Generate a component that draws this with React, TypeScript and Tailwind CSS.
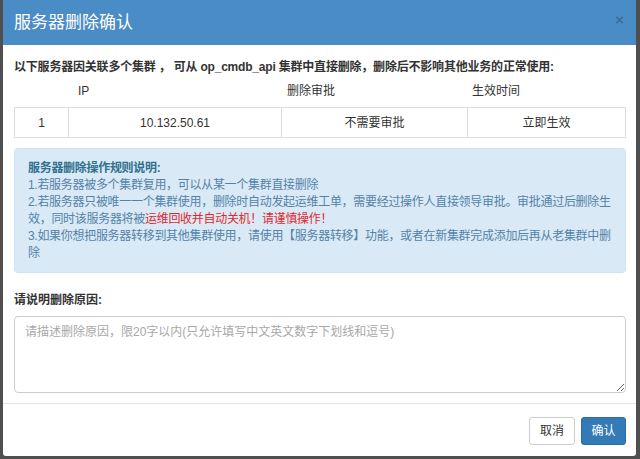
import React from 'react';

const font = { fontFamily: '"Liberation Sans", "Noto Sans CJK SC", sans-serif' };

const App = () => {
  return (
    <div className="w-[640px] h-[459px] bg-[#4f4f4f] pl-[3px] pr-[4px] pb-[3px]" style={font}>
      <div className="h-full bg-white flex flex-col rounded-b-[3px] overflow-hidden">
        {/* Header */}
        <div className="h-[45px] shrink-0 bg-[#4a8cc6] pl-[11px] pr-[12px] flex items-center justify-between">
          <span className="text-[17px] text-white leading-none">服务器删除确认</span>
          <span className="text-[15px] font-bold text-[#3a6e9c] leading-none -mt-[6px]">×</span>
        </div>

        {/* Body */}
        <div className="flex-1 pl-[11px] pr-[10px] pt-[13px] text-[#333] text-[12px]">
          <p className="font-bold leading-[18px] tracking-[-0.2px]">
            以下服务器因关联多个集群 ， 可从 op_cmdb_api 集群中直接删除，删除后不影响其他业务的正常使用:
          </p>

          {/* Table header */}
          <div className="grid grid-cols-[54px_213px_186px_1fr] h-[24px] mt-[3px] items-center">
            <div />
            <div className="pl-[10px]">IP</div>
            <div className="pl-[6px]">删除审批</div>
            <div className="pl-[5px]">生效时间</div>
          </div>

          {/* Table row */}
          <div className="grid grid-cols-[54px_213px_186px_1fr] h-[31px] mt-[4px] border border-[#dddddd] items-stretch text-center">
            <div className="flex items-center justify-center border-r border-[#dddddd]">1</div>
            <div className="flex items-center justify-center border-r border-[#dddddd]">10.132.50.61</div>
            <div className="flex items-center justify-center border-r border-[#dddddd]">不需要审批</div>
            <div className="flex items-center justify-center">立即生效</div>
          </div>

          {/* Info box */}
          <div className="mt-[10px] bg-[#d9eaf6] border border-[#cfe3f1] rounded-[4px] pl-[13px] pr-[8px] pt-[11px] pb-[10px] leading-[17px] text-[#5482a8] tracking-[-0.3px]">
            <div className="font-bold text-[#31708f]">服务器删除操作规则说明:</div>
            <div className="whitespace-nowrap">1.若服务器被多个集群复用，可以从某一个集群直接删除</div>
            <div className="whitespace-nowrap">2.若服务器只被唯一一个集群使用，删除时自动发起运维工单，需要经过操作人直接领导审批。审批通过后删除生</div>
            <div className="whitespace-nowrap">
              效，同时该服务器将被<span className="text-[#e4262b]">运维回收并自动关机！请谨慎操作！</span>
            </div>
            <div className="whitespace-nowrap">3.如果你想把服务器转移到其他集群使用，请使用【服务器转移】功能，或者在新集群完成添加后再从老集群中删</div>
            <div>除</div>
          </div>

          {/* Reason */}
          <div className="mt-[18px] font-bold leading-[18px]">请说明删除原因:</div>
          <textarea
            className="mt-[7px] block w-full h-[77px] border border-[#cccccc] rounded-[4px] px-[10px] py-[6px] text-[12px] leading-[18px] placeholder:text-[#a8a8a8] outline-none resize-y"
            placeholder="请描述删除原因，限20字以内(只允许填写中文英文数字下划线和逗号)"
            style={font}
          />
        </div>

        {/* Footer */}
        <div className="shrink-0 border-t border-[#e5e5e5] pt-[13px] pb-[11px] pr-[10px] flex justify-end gap-[6px]">
          <button className="h-[28px] w-[46px] border border-[#cccccc] rounded-[3px] bg-white text-[12px] text-[#333]">
            取消
          </button>
          <button className="h-[28px] w-[45px] border border-[#2e6da4] rounded-[3px] bg-[#337ab7] text-[12px] text-white">
            确认
          </button>
        </div>
      </div>
    </div>
  );
};

export default App;
